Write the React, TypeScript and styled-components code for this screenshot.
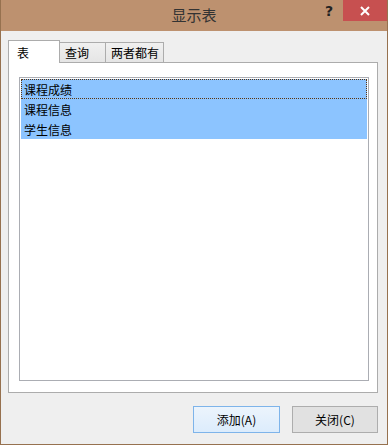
import React from "react";
import styled, { createGlobalStyle } from "styled-components";

const Global = createGlobalStyle`
  html, body { margin: 0; padding: 0; background: #efefef; }
  body { font-family: "Noto Sans CJK SC", "Liberation Sans", sans-serif; }
  * { box-sizing: border-box; }
`;

const Win = styled.div`
  width: 388px;
  height: 445px;
  border: 1px solid #96714f;
  border-top: none;
  background: #efefef;
  display: flex;
  flex-direction: column;
`;

const TitleBar = styled.div`
  height: 31px;
  background: #bd916f;
  position: relative;
  display: flex;
  align-items: flex-start;
  justify-content: center;
  flex-shrink: 0;
`;

const Title = styled.div`
  font-size: 15px;
  line-height: 16px;
  margin-top: 7px;
  color: #333;
`;

const Help = styled.div`
  position: absolute;
  right: 54px;
  top: 3px;
  font-family: "DejaVu Sans", sans-serif;
  font-weight: bold;
  font-size: 14px;
  line-height: 16px;
  color: #222;
`;

const CloseBox = styled.div`
  position: absolute;
  right: 0;
  top: 0;
  width: 44px;
  height: 21px;
  background: #c75050;
  display: flex;
  align-items: center;
  justify-content: center;
`;

const Body = styled.div`
  flex: 1;
  padding: 9px 9px 0 7px;
  display: flex;
  flex-direction: column;
`;

const TabRow = styled.div`
  display: flex;
  height: 22px;
  position: relative;
  z-index: 1;
`;

const Tab = styled.div<{ $active?: boolean; $w: number }>`
  width: ${(p) => p.$w}px;
  height: ${(p) => (p.$active ? 23 : 21)}px;
  margin-top: ${(p) => (p.$active ? 0 : 2)}px;
  margin-left: ${(p) => (p.$active ? 0 : -1)}px;
  border: 1px solid #acacac;
  border-bottom: ${(p) => (p.$active ? "none" : "1px solid #acacac")};
  background: ${(p) =>
    p.$active ? "#ffffff" : "linear-gradient(#f0f0f0, #e5e5e5)"};
  font-size: 12px;
  line-height: 17px;
  padding-left: ${(p) => (p.$active ? 8 : 5)}px;
  padding-top: ${(p) => (p.$active ? 3 : 1)}px;
  color: #000;
  &:first-child { margin-left: 0; }
`;

const Panel = styled.div`
  width: 370px;
  height: 331px;
  border: 1px solid #acacac;
  background: #fff;
  padding: 14px 0 0 10px;
`;

const ListBox = styled.div`
  width: 350px;
  height: 304px;
  border: 1px solid #abadb3;
  padding: 1px;
  background: #fff;
`;

const Row = styled.div<{ $focus?: boolean }>`
  height: 20px;
  background: #8cc4ff;
  font-size: 12px;
  line-height: 18px;
  padding-left: 2px;
  padding-top: 1px;
  color: #000;
  border: 1px dotted ${(p) => (p.$focus ? "#5a3411" : "transparent")};
`;

const ButtonBar = styled.div`
  display: flex;
  justify-content: flex-end;
  gap: 12px;
  margin-top: 13px;
`;

const Btn = styled.div<{ $primary?: boolean }>`
  width: 87px;
  height: 27px;
  border: 1px solid ${(p) => (p.$primary ? "#7eb4ea" : "#adadad")};
  background: ${(p) =>
    p.$primary ? "linear-gradient(#ecf4fc, #dcecfc)" : "#e1e1e1"};
  display: flex;
  align-items: center;
  justify-content: center;
  font-size: 12px;
  color: #000;
  &:last-child { width: 86px; }
`;

export default function App() {
  return (
    <>
      <Global />
      <Win>
        <TitleBar>
          <Title>显示表</Title>
          <Help>?</Help>
          <CloseBox>
            <svg width="10" height="10" viewBox="0 0 10 10">
              <path d="M1 1 L9 9 M9 1 L1 9" stroke="#fff" strokeWidth="2" />
            </svg>
          </CloseBox>
        </TitleBar>
        <Body>
          <TabRow>
            <Tab $active $w={52}>表</Tab>
            <Tab $w={47}>查询</Tab>
            <Tab $w={59}>两者都有</Tab>
          </TabRow>
          <Panel>
            <ListBox>
              <Row $focus>课程成绩</Row>
              <Row>课程信息</Row>
              <Row>学生信息</Row>
            </ListBox>
          </Panel>
          <ButtonBar>
            <Btn $primary>添加(A)</Btn>
            <Btn>关闭(C)</Btn>
          </ButtonBar>
        </Body>
      </Win>
    </>
  );
}
